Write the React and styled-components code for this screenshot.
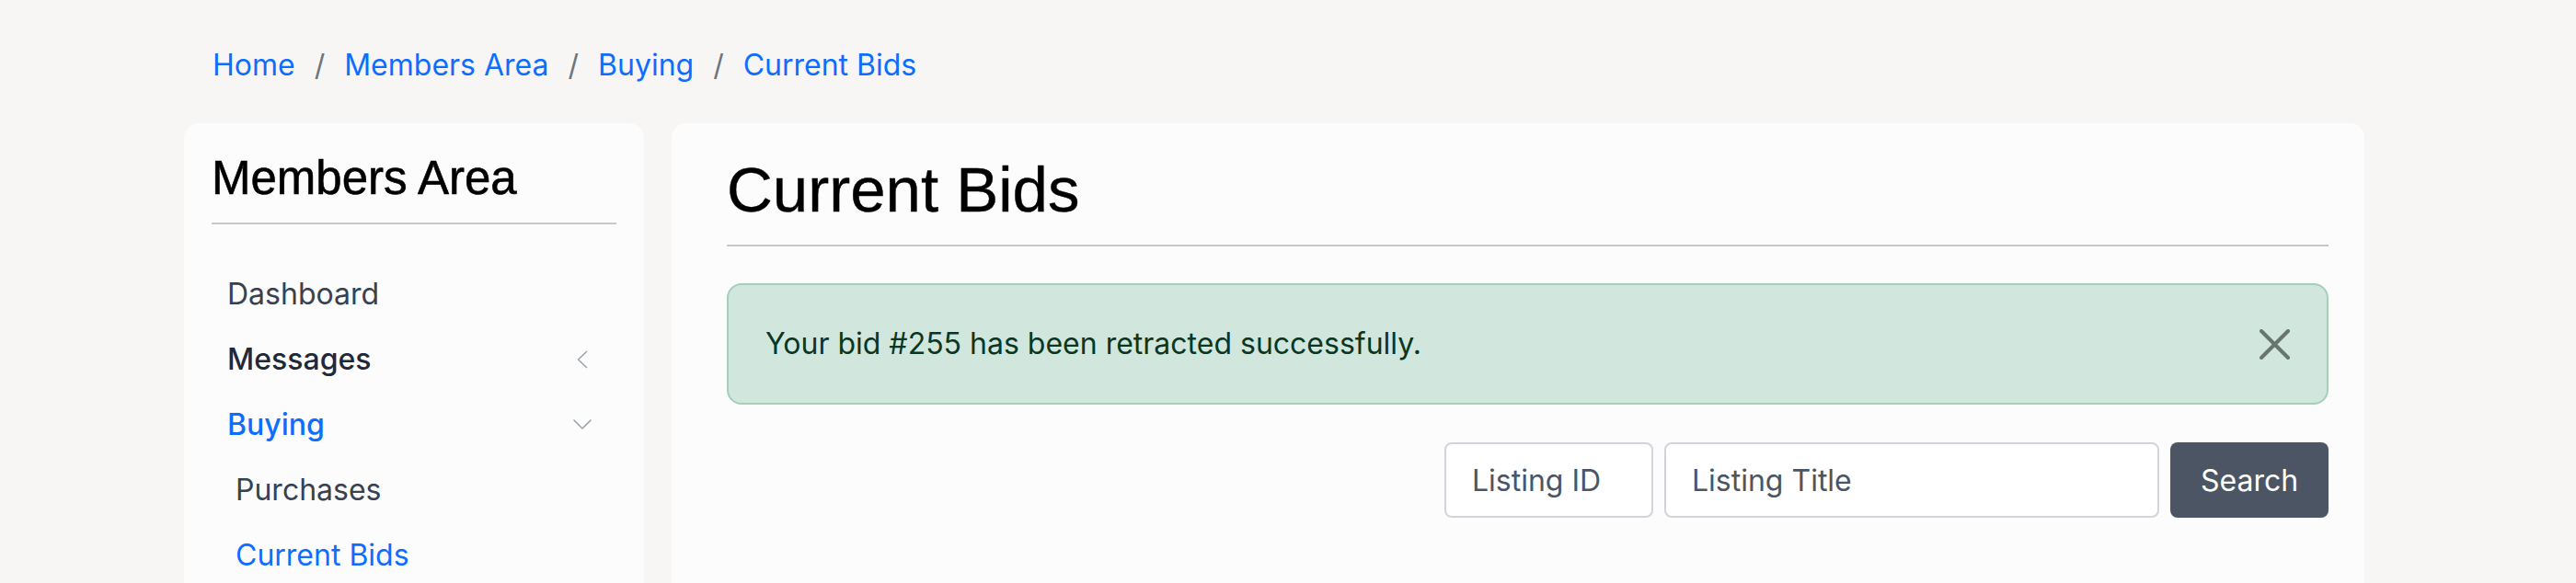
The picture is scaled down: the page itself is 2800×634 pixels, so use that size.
import React from 'react'
import styled, { createGlobalStyle } from 'styled-components'

let GlobalStyle = createGlobalStyle`
  html, body {
    margin: 0;
    padding: 0;
    overflow: hidden;
    background: #f7f6f4;
    font-family: Inter, "Noto Sans", sans-serif;
    font-size: 32px;
    line-height: 48px;
  }
  * { box-sizing: border-box; }
`

let links = ['Home', 'Members Area', 'Buying', 'Current Bids']

let menu = [
  { label: 'Dashboard', tone: 'plain' },
  { label: 'Messages', tone: 'strong', chevron: 'left' },
  { label: 'Buying', tone: 'active', chevron: 'down' },
  { label: 'Purchases', tone: 'plain', sub: true },
  { label: 'Current Bids', tone: 'link', sub: true },
]

let tones = {
  plain: { color: '#374151', weight: 400 },
  strong: { color: '#1f2937', weight: 500 },
  active: { color: '#0d6efd', weight: 500 },
  link: { color: '#0d6efd', weight: 400 },
}

function Chevron({ dir }) {
  return (
    <ChevronBox viewBox="0 0 20 20">
      {dir === 'left'
        ? <polyline points="14.5,1.5 5.5,10 14.5,18.5" />
        : <polyline points="1,5 10,14 19,5" />}
    </ChevronBox>
  )
}

export default function App() {
  return (
    <Page>
      <GlobalStyle />
      <Crumbs>
        {links.map((l, i) => (
          <Crumb key={l}>
            {i > 0 && <Slash>/</Slash>}
            <CrumbLink href="#">{l}</CrumbLink>
          </Crumb>
        ))}
      </Crumbs>

      <Layout>
        <Side>
          <SideTitle>Members Area</SideTitle>
          <Rule />
          <Menu>
            {menu.map((m) => (
              <MenuItem key={m.label} $sub={m.sub} $tone={m.tone}>
                <span>{m.label}</span>
                {m.chevron && <Chevron dir={m.chevron} />}
              </MenuItem>
            ))}
          </Menu>
        </Side>

        <Main>
          <Title>Current Bids</Title>
          <TitleRule />
          <Alert>
            <span>Your bid #255 has been retracted successfully.</span>
            <Close aria-label="Close">
              <svg width="33" height="33" viewBox="0 0 33 33">
                <line x1="2" y1="2" x2="31" y2="31" />
                <line x1="31" y1="2" x2="2" y2="31" />
              </svg>
            </Close>
          </Alert>
          <SearchRow>
            <Field $w={227} placeholder="Listing ID" />
            <Field $w={538} placeholder="Listing Title" />
            <SearchBtn>Search</SearchBtn>
          </SearchRow>
        </Main>
      </Layout>
    </Page>
  )
}

let Page = styled.div`
  width: 2370px;
  margin-left: 200px;
  padding-top: 47px;
`
let Crumbs = styled.nav`
  display: flex;
  padding-left: 31px;
  height: 48px;
`
let Crumb = styled.div`
  display: flex;
`
let Slash = styled.span`
  color: #6c757d;
  padding: 0 21px;
`
let CrumbLink = styled.a`
  color: #0d6efd;
  text-decoration: none;
`
let Layout = styled.div`
  display: grid;
  grid-template-columns: 500px 1840px;
  gap: 30px;
  margin-top: 39px;
  align-items: start;
`
let Side = styled.aside`
  background: #fcfcfc;
  border-radius: 16px;
  padding: 30px 30px 40px;
`
let SideTitle = styled.h3`
  margin: 0;
  font-family: "Liberation Sans", Arial, sans-serif;
  font-weight: 400;
  font-size: 51px;
  line-height: 60px;
  color: #000;
  -webkit-text-stroke: 0.6px #000;
`
let Rule = styled.div`
  height: 2px;
  background: #c8c8c8;
  margin-top: 18px;
`
let Menu = styled.ul`
  list-style: none;
  margin: 40px 0 0;
  padding: 0;
`
let MenuItem = styled.li`
  display: flex;
  align-items: center;
  justify-content: space-between;
  padding: 11.5px 27px 11.5px ${(p) => (p.$sub ? '26px' : '17px')};
  color: ${(p) => tones[p.$tone].color};
  font-weight: ${(p) => tones[p.$tone].weight};
`
let ChevronBox = styled.svg`
  width: 20px;
  height: 20px;
  fill: none;
  stroke: #9ca3af;
  stroke-width: 1.6;
  stroke-linecap: round;
  stroke-linejoin: round;
`
let Main = styled.main`
  background: #fcfcfc;
  border-radius: 16px;
  padding: 31px 39px 100px 60px;
`
let Title = styled.h1`
  margin: 0;
  font-family: "Liberation Sans", Arial, sans-serif;
  font-weight: 400;
  font-size: 69px;
  line-height: 84px;
  color: #000;
  -webkit-text-stroke: 0.4px #000;
`
let TitleRule = styled.div`
  height: 2px;
  background: #c8c8c8;
  margin-top: 17px;
`
let Alert = styled.div`
  display: flex;
  align-items: center;
  justify-content: space-between;
  margin-top: 40px;
  padding: 40px;
  background: #d1e7dd;
  border: 2px solid #a3cfbb;
  border-radius: 16px;
  color: #0a3622;
`
let Close = styled.button`
  display: flex;
  padding: 0;
  border: 0;
  background: none;
  svg line {
    stroke: #69756f;
    stroke-width: 4;
    stroke-linecap: round;
  }
`
let SearchRow = styled.form`
  display: flex;
  justify-content: flex-end;
  gap: 12px;
  margin-top: 41px;
`
let Field = styled.input`
  width: ${(p) => p.$w}px;
  height: 82px;
  padding: 0 28px;
  border: 2px solid #d1d5db;
  border-radius: 8px;
  background: #fff;
  font-family: Inter, sans-serif;
  font-size: 32px;
  color: #1f2937;
  &::placeholder { color: #4b5563; }
`
let SearchBtn = styled.button`
  width: 172px;
  height: 82px;
  border: 0;
  border-radius: 8px;
  background: #4b5563;
  color: #fff;
  font-family: Inter, sans-serif;
  font-size: 32px;
`
